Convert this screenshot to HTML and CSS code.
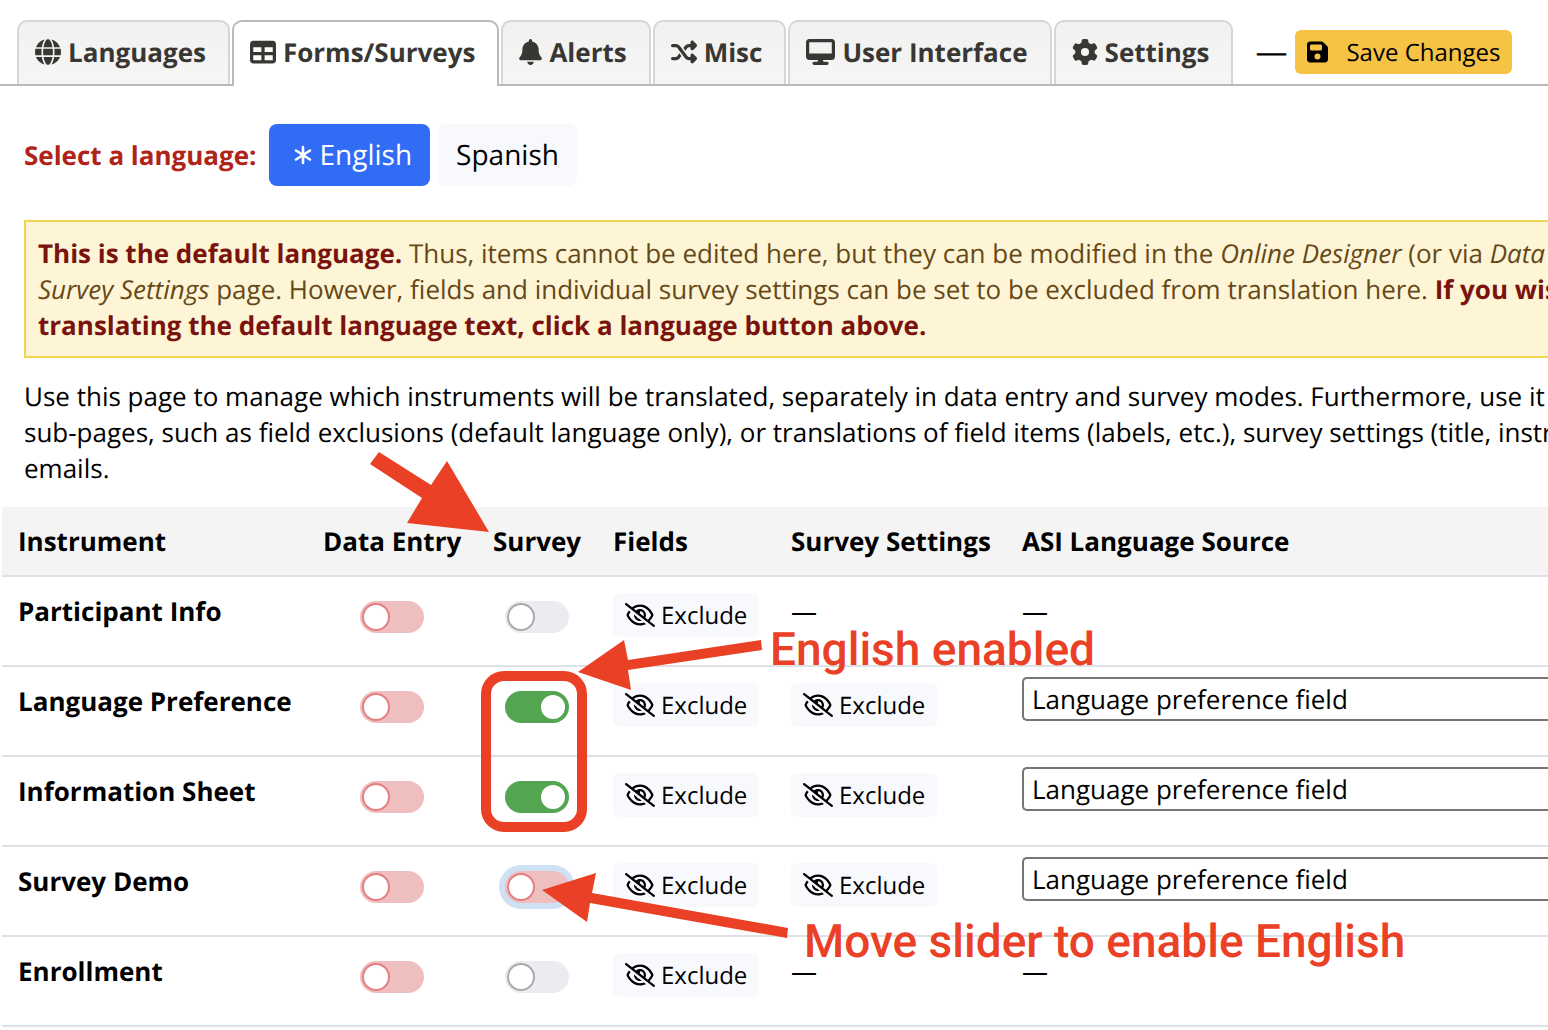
FILE: index.html
```html
<!DOCTYPE html>
<html lang="en">
<head>
  <meta charset="UTF-8">
  <meta name="viewport" content="width=device-width, initial-scale=1">
  <title>Multi-Language Management - Forms/Surveys</title>
  <link rel="stylesheet" href="styles.css">
</head>
<body>

  <!-- icon set -->
  <svg class="sprite" aria-hidden="true">
    <symbol id="i-globe" viewBox="0 0 512 512"><path d="M352 256c0 22.2-1.2 43.6-3.3 64H163.3c-2.2-20.4-3.3-41.8-3.3-64s1.2-43.6 3.3-64H348.7c2.2 20.4 3.3 41.8 3.3 64zm28.8-64H503.9c5.3 20.5 8.1 41.9 8.1 64s-2.8 43.5-8.1 64H380.8c2.1-20.6 3.2-42 3.2-64s-1.1-43.4-3.2-64zm112.6-32H376.7c-10-63.9-29.8-117.4-55.3-151.6c78.3 20.7 142 77.5 171.9 151.6zm-149.1 0H167.7c6.1-36.4 15.5-68.6 27-94.7c10.5-23.6 22.2-40.7 33.5-51.5C239.4 3.2 248.7 0 256 0s16.6 3.2 27.8 13.8c11.3 10.8 23 27.9 33.5 51.5c11.6 26 20.9 58.2 27 94.7zm-209 0H18.6C48.6 85.9 112.2 29.1 190.6 8.4C165.1 42.6 145.3 96.1 135.3 160zM8.1 192H131.2c-2.1 20.6-3.2 42-3.2 64s1.1 43.4 3.2 64H8.1C2.8 299.5 0 278.1 0 256s2.8-43.5 8.1-64zM194.7 446.6c-11.6-26-20.9-58.2-27-94.6H344.3c-6.1 36.4-15.5 68.6-27 94.6c-10.5 23.6-22.2 40.7-33.5 51.5C272.6 508.8 263.3 512 256 512s-16.6-3.2-27.8-13.8c-11.3-10.8-23-27.9-33.5-51.5zM135.3 352c10 63.9 29.8 117.4 55.3 151.6C112.2 482.9 48.6 426.1 18.6 352H135.3zm358.1 0c-30 74.1-93.6 130.9-171.9 151.6c25.5-34.2 45.2-87.7 55.3-151.6H493.4z"/></symbol>
    <symbol id="i-table" viewBox="0 0 512 512"><path fill-rule="evenodd" d="M64 256V160H224v96H64zm0 64H224v96H64V320zm224 96V320H448v96H288zM448 256H288V160H448v96zM64 32C28.7 32 0 60.7 0 96V416c0 35.3 28.7 64 64 64H448c35.3 0 64-28.7 64-64V96c0-35.3-28.7-64-64-64H64z"/></symbol>
    <symbol id="i-bell" viewBox="0 0 448 512"><path d="M224 0c-17.7 0-32 14.3-32 32V51.2C119 66 64 130.6 64 208v18.8c0 47-17.3 92.4-48.5 127.6l-7.4 8.3c-8.4 9.4-10.4 22.9-5.3 34.4S19.4 416 32 416H416c12.6 0 24-7.4 29.2-18.9s3.1-25-5.3-34.4l-7.4-8.3C401.3 319.2 384 273.9 384 226.8V208c0-77.4-55-142-128-156.8V32c0-17.7-14.3-32-32-32zm45.3 493.3c12-12 18.7-28.3 18.7-45.3H224 160c0 17 6.7 33.3 18.7 45.3s28.3 18.7 45.3 18.7s33.3-6.7 45.3-18.7z"/></symbol>
    <symbol id="i-shuffle" viewBox="0 0 512 512"><path d="M403.8 34.4c12-5 25.7-2.2 34.9 6.9l64 64c6 6 9.4 14.1 9.4 22.6s-3.4 16.6-9.4 22.6l-64 64c-9.2 9.2-22.9 11.9-34.9 6.9s-19.8-16.6-19.8-29.6V160H352c-10.1 0-19.6 4.7-25.6 12.8L284 229.3 244 176l31.2-41.6C293.3 110.2 321.8 96 352 96h32V64c0-12.9 7.8-24.6 19.8-29.6zM164 282.7L204 336l-31.2 41.6C154.7 401.8 126.2 416 96 416H32c-17.7 0-32-14.3-32-32s14.3-32 32-32H96c10.1 0 19.6-4.7 25.6-12.8L164 282.7zm274.6 188c-9.2 9.2-22.9 11.9-34.9 6.9s-19.8-16.6-19.8-29.6V416H352c-30.2 0-58.7-14.2-76.8-38.4L121.6 172.8c-6-8.1-15.5-12.8-25.6-12.8H32c-17.7 0-32-14.3-32-32s14.3-32 32-32H96c30.2 0 58.7 14.2 76.8 38.4L326.4 339.2c6 8.1 15.5 12.8 25.6 12.8h32V320c0-12.9 7.8-24.6 19.8-29.6s25.7-2.2 34.9 6.9l64 64c6 6 9.4 14.1 9.4 22.6s-3.4 16.6-9.4 22.6l-64 64z"/></symbol>
    <symbol id="i-desktop" viewBox="0 0 576 512"><path fill-rule="evenodd" d="M64 0C28.7 0 0 28.7 0 64V352c0 35.3 28.7 64 64 64H240l-10.7 32H160c-17.7 0-32 14.3-32 32s14.3 32 32 32H416c17.7 0 32-14.3 32-32s-14.3-32-32-32H346.7L336 416H512c35.3 0 64-28.7 64-64V64c0-35.3-28.7-64-64-64H64zM512 64V288H64V64H512z"/></symbol>
    <symbol id="i-gear" viewBox="0 0 512 512"><path fill-rule="evenodd" d="M495.9 166.6c3.2 8.7 .5 18.4-6.4 24.6l-43.3 39.4c1.1 8.3 1.7 16.8 1.7 25.4s-.6 17.1-1.7 25.4l43.3 39.4c6.9 6.2 9.6 15.9 6.4 24.6c-4.4 11.9-9.7 23.3-15.8 34.3l-4.7 8.1c-6.6 11-14 21.4-22.1 31.2c-5.9 7.2-15.7 9.6-24.5 6.8l-55.7-17.7c-13.4 10.3-28.2 18.9-44 25.4l-12.5 57.1c-2 9.1-9 16.3-18.2 17.8c-13.8 2.3-28 3.5-42.5 3.5s-28.7-1.2-42.5-3.5c-9.2-1.5-16.2-8.7-18.2-17.8l-12.5-57.1c-15.8-6.5-30.6-15.1-44-25.4L83.1 425.9c-8.8 2.8-18.6 .3-24.5-6.8c-8.1-9.8-15.5-20.2-22.1-31.2l-4.7-8.1c-6.1-11-11.4-22.4-15.8-34.3c-3.2-8.7-.5-18.4 6.4-24.6l43.3-39.4C64.6 273.1 64 264.6 64 256s.6-17.1 1.7-25.4L22.4 191.2c-6.9-6.2-9.6-15.9-6.4-24.6c4.4-11.9 9.7-23.3 15.8-34.3l4.7-8.1c6.6-11 14-21.4 22.1-31.2c5.9-7.2 15.7-9.6 24.5-6.8l55.7 17.7c13.4-10.3 28.2-18.9 44-25.4l12.5-57.1c2-9.1 9-16.3 18.2-17.8C227.3 1.2 241.5 0 256 0s28.7 1.2 42.5 3.5c9.2 1.5 16.2 8.7 18.2 17.8l12.5 57.1c15.8 6.5 30.6 15.1 44 25.4l55.7-17.7c8.8-2.8 18.6-.3 24.5 6.8c8.1 9.8 15.5 20.2 22.1 31.2l4.7 8.1c6.1 11 11.4 22.4 15.8 34.3zM256 336a80 80 0 1 0 0-160 80 80 0 1 0 0 160z"/></symbol>
    <symbol id="i-save" viewBox="0 0 448 512"><path fill-rule="evenodd" d="M64 32C28.7 32 0 60.7 0 96V416c0 35.3 28.7 64 64 64H384c35.3 0 64-28.7 64-64V173.3c0-17-6.7-33.3-18.7-45.3L352 50.7C340 38.7 323.7 32 306.7 32H64zm0 96c0-17.7 14.3-32 32-32H288c17.7 0 32 14.3 32 32v64c0 17.7-14.3 32-32 32H96c-17.7 0-32-14.3-32-32V128zM224 288a64 64 0 1 1 0 128 64 64 0 1 1 0-128z"/></symbol>
    <symbol id="i-hide" viewBox="0 0 640 512"><path d="M38.8 5.1C28.4-3.1 13.3-1.2 5.1 9.2S-1.2 34.7 9.2 42.9l592 464c10.4 8.2 25.5 6.3 33.7-4.1s6.3-25.5-4.1-33.7L525.6 386.7c39.6-40.6 66.4-86.1 79.9-118.4c3.3-7.9 3.3-16.7 0-24.6c-14.9-35.7-46.2-87.7-93-131.1C465.5 68.8 400.8 32 320 32c-68.2 0-125 26.3-169.3 60.8L38.8 5.1zm151 118.3C226 97.7 269.5 80 320 80c65.2 0 118.8 29.6 159.9 67.7C518.4 183.5 545 226 558.6 256c-12.6 28-36.6 66.8-70.9 100.9l-53.8-42.2c9.1-17.6 14.2-37.5 14.2-58.7c0-70.7-57.3-128-128-128c-32.2 0-61.7 11.9-84.2 31.5l-46.1-36.1zM394.9 284.2l-81.5-63.9c4.2-8.5 6.6-18.2 6.6-28.3c0-5.5-.7-10.9-2-16c.7 0 1.3 0 2 0c44.2 0 80 35.8 80 80c0 9.9-1.8 19.4-5.1 28.2zm9.4 130.3C378.8 425.4 350.7 432 320 432c-65.2 0-118.8-29.6-159.9-67.7C121.6 328.5 95 286 81.4 256c8.3-18.4 21.5-41.5 39.4-64.8L83.1 161.5C60.3 191.2 44 220.8 34.5 243.7c-3.3 7.9-3.3 16.7 0 24.6c14.9 35.7 46.2 87.7 93 131.1C174.5 443.2 239.2 480 320 480c47.8 0 89.9-12.9 126.2-32.5l-41.9-33zM192 256c0 70.7 57.3 128 128 128c13.3 0 26.1-2 38.2-5.8L302 334c-23.5-5.4-43.1-21.2-53.7-42.3l-56.1-44.2c-.2 2.8-.3 5.6-.3 8.5z"/></symbol>
    <symbol id="i-star" viewBox="0 0 18 20"><path fill="none" stroke="currentColor" stroke-width="2.6" stroke-linecap="round" d="M9 2v16M2 5.5l14 9M16 5.5l-14 9"/></symbol>
  </svg>

  <nav class="tabs">
    <a href="#" class="tab"><svg class="icon"><use href="#i-globe"/></svg>Languages</a>
    <a href="#" class="tab active"><svg class="icon"><use href="#i-table"/></svg>Forms/Surveys</a>
    <a href="#" class="tab"><svg class="icon narrow"><use href="#i-bell"/></svg>Alerts</a>
    <a href="#" class="tab"><svg class="icon"><use href="#i-shuffle"/></svg>Misc</a>
    <a href="#" class="tab"><svg class="icon wide"><use href="#i-desktop"/></svg>User Interface</a>
    <a href="#" class="tab"><svg class="icon"><use href="#i-gear"/></svg>Settings</a>
    <div class="actions">
      <span class="dash">—</span>
      <button type="button" class="btn btn-save"><svg class="icon-save"><use href="#i-save"/></svg>Save Changes</button>
    </div>
  </nav>

  <main>
    <section class="intro">
      <div class="languages">
        <span class="languages-title">Select a language:</span>
        <button type="button" class="lang selected"><svg class="icon-star"><use href="#i-star"/></svg>English</button>
        <button type="button" class="lang">Spanish</button>
      </div>

      <div class="notice">
        <b>This is the default language.</b> Thus, items cannot be edited here, but they can be modified in the <i>Online Designer</i> (or via <i>Data</i><br>
        <i>Survey Settings</i> page. However, fields and individual survey settings can be set to be excluded from translation here. <b>If you wish</b><br>
        <b>translating the default language text, click a language button above.</b>
      </div>

      <p class="help">
        Use this page to manage which instruments will be translated, separately in data entry and survey modes. Furthermore, use it<br>
        sub-pages, such as field exclusions (default language only), or translations of field items (labels, etc.), survey settings (title, instructions<br>
        emails.
      </p>
    </section>

    <table class="instruments">
      <colgroup>
        <col class="col-name">
        <col class="col-entry">
        <col class="col-survey">
        <col class="col-fields">
        <col class="col-settings">
        <col>
      </colgroup>
      <thead>
        <tr>
          <th>Instrument</th>
          <th>Data Entry</th>
          <th>Survey</th>
          <th>Fields</th>
          <th>Survey Settings</th>
          <th>ASI Language Source</th>
        </tr>
      </thead>
      <tbody>
        <tr>
          <th scope="row">Participant Info</th>
          <td class="center"><input type="checkbox" class="switch off" aria-label="Participant Info data entry"></td>
          <td class="center"><input type="checkbox" class="switch" aria-label="Participant Info survey"></td>
          <td><button type="button" class="btn"><svg class="icon-hide"><use href="#i-hide"/></svg>Exclude</button></td>
          <td>—</td>
          <td>—</td>
        </tr>
        <tr>
          <th scope="row">Language Preference</th>
          <td class="center"><input type="checkbox" class="switch off" aria-label="Language Preference data entry"></td>
          <td class="center"><input type="checkbox" class="switch" checked aria-label="Language Preference survey"></td>
          <td><button type="button" class="btn"><svg class="icon-hide"><use href="#i-hide"/></svg>Exclude</button></td>
          <td><button type="button" class="btn"><svg class="icon-hide"><use href="#i-hide"/></svg>Exclude</button></td>
          <td class="source"><select aria-label="Language Preference ASI language source"><option>Language preference field</option></select></td>
        </tr>
        <tr>
          <th scope="row">Information Sheet</th>
          <td class="center"><input type="checkbox" class="switch off" aria-label="Information Sheet data entry"></td>
          <td class="center"><input type="checkbox" class="switch" checked aria-label="Information Sheet survey"></td>
          <td><button type="button" class="btn"><svg class="icon-hide"><use href="#i-hide"/></svg>Exclude</button></td>
          <td><button type="button" class="btn"><svg class="icon-hide"><use href="#i-hide"/></svg>Exclude</button></td>
          <td class="source"><select aria-label="Information Sheet ASI language source"><option>Language preference field</option></select></td>
        </tr>
        <tr>
          <th scope="row">Survey Demo</th>
          <td class="center"><input type="checkbox" class="switch off" aria-label="Survey Demo data entry"></td>
          <td class="center"><input type="checkbox" class="switch off focused" aria-label="Survey Demo survey"></td>
          <td><button type="button" class="btn"><svg class="icon-hide"><use href="#i-hide"/></svg>Exclude</button></td>
          <td><button type="button" class="btn"><svg class="icon-hide"><use href="#i-hide"/></svg>Exclude</button></td>
          <td class="source"><select aria-label="Survey Demo ASI language source"><option>Language preference field</option></select></td>
        </tr>
        <tr>
          <th scope="row">Enrollment</th>
          <td class="center"><input type="checkbox" class="switch off" aria-label="Enrollment data entry"></td>
          <td class="center"><input type="checkbox" class="switch" aria-label="Enrollment survey"></td>
          <td><button type="button" class="btn"><svg class="icon-hide"><use href="#i-hide"/></svg>Exclude</button></td>
          <td>—</td>
          <td>—</td>
        </tr>
      </tbody>
    </table>
  </main>

  <!-- red markup drawn over the page -->
  <svg class="marks" aria-hidden="true">
    <path d="M379 452L370 464L422 498L407 523L489 532L447 461L431 485Z"/>
    <path d="M578 672L624 640L628 660L761 640L762 650L628 670L631 690Z"/>
    <path d="M542 890L596 873L592 893L788 928L787 938L590 903L587 922Z"/>
    <rect x="486" y="676" width="96" height="151" rx="18"/>
  </svg>
  <span class="note note-enabled">English enabled</span>
  <span class="note note-move">Move slider to enable English</span>

</body>
</html>
```
FILE: styles.css
```css
:root {
  --text: #000;
  --tab-text: #393733;
  --line: #dee2e6;
  --light: #f8f9fc;
  --mark: #ea4026;
}

* {
  box-sizing: border-box;
}

body {
  position: relative;
  margin: 0;
  padding-top: 20px;
  background: #fff;
  color: var(--text);
  font-family: "Open Sans", sans-serif;
  font-size: 26px;
  line-height: 36px;
  text-rendering: geometricPrecision;
  overflow-x: hidden;
}

button, select {
  font-family: inherit;
  color: var(--text);
  text-rendering: inherit;
}

.sprite {
  position: absolute;
  width: 0;
  height: 0;
}

svg {
  fill: currentColor;
  flex: none;
}

/* tabs */
.tabs {
  display: flex;
  gap: 2px;
  height: 66px;
  padding-left: 17px;
  border-bottom: 2px solid #b9b9b9;
}

.tab {
  display: flex;
  align-items: center;
  gap: 7px;
  padding: 0 22px 2px 16px;
  border: 2px solid #d6d6d4;
  border-bottom: 0;
  border-radius: 10px 10px 0 0;
  background: linear-gradient(#f1f1f0, #f6f6f6);
  color: var(--tab-text);
  font-weight: bold;
  text-decoration: none;
  white-space: nowrap;
}

.tab.active {
  margin-bottom: -2px;
  padding-bottom: 4px;
  border-color: #b9b9b9;
  background: #fff;
}

.icon {
  width: 26px;
  height: 26px;
}

.icon.narrow {
  width: 23px;
}

.icon.wide {
  width: 29px;
}

.actions {
  display: flex;
  align-items: center;
  gap: 8px;
  margin-left: 20px;
}

.dash {
  font-size: 32px;
}

.btn {
  display: inline-flex;
  align-items: center;
  gap: 6px;
  height: 44px;
  padding: 0 12px;
  border: 0;
  border-radius: 6px;
  background: var(--light);
  font-size: 24px;
  white-space: nowrap;
}

.btn-save {
  gap: 18px;
  background: #f6c344;
}

.icon-save {
  width: 21px;
  height: 24px;
}

.icon-hide {
  width: 30px;
  height: 24px;
}

/* language picker */
.intro {
  padding: 38px 0 21px 24px;
  white-space: nowrap;
}

.languages {
  display: flex;
  align-items: center;
  gap: 8px;
}

.languages-title {
  margin-right: 4px;
  color: #b02318;
  font-weight: bold;
}

.lang {
  display: flex;
  align-items: center;
  gap: 8px;
  height: 62px;
  padding: 0 18px;
  border: 0;
  border-radius: 8px;
  background: var(--light);
  font-size: 28px;
}

.lang.selected {
  padding-left: 25px;
  background: #316cf4;
  color: #fff;
}

.icon-star {
  width: 18px;
  height: 20px;
}

.notice {
  margin-top: 34px;
  padding: 13px 0 13px 12px;
  border: 2px solid #f2d650;
  border-right: 0;
  background: #fdf5d5;
  color: #664818;
  overflow: hidden;
}

.notice b {
  color: #7a130d;
}

.help {
  margin: 20px 0 0;
  overflow: hidden;
}

/* instruments table */
.instruments {
  width: calc(100% - 2px);
  margin-left: 2px;
  table-layout: fixed;
  border-collapse: separate;
  border-spacing: 0;
}

.col-name { width: 305px; }
.col-entry { width: 170px; }
.col-survey { width: 120px; }
.col-fields { width: 178px; }
.col-settings { width: 231px; }

.instruments th,
.instruments td {
  height: 90px;
  padding: 16px 0 0 16px;
  border-bottom: 2px solid var(--line);
  text-align: left;
  vertical-align: top;
  white-space: nowrap;
}

.instruments thead th {
  height: 70px;
  background: #f4f4f4;
}

.instruments .center {
  padding: 24px 16px 0;
  text-align: center;
}

.instruments .source {
  padding-top: 10px;
}

.switch {
  appearance: none;
  display: block;
  width: 64px;
  height: 32px;
  margin: 0 auto;
  padding: 2px;
  border-radius: 16px;
  background: #ebecf0;
  color: #aaa;
}

.switch::before {
  content: "";
  display: block;
  width: 28px;
  height: 28px;
  box-sizing: border-box;
  border: 2px solid currentColor;
  border-radius: 50%;
  background: #fff;
}

.switch.off {
  background: #efbfc0;
  color: #e37f80;
}

.switch:checked {
  background: #54a552;
  color: #54a552;
}

.switch:checked::before {
  margin-left: auto;
}

.switch.focused {
  box-shadow: 0 0 0 6px #cfe1f5;
}

select {
  appearance: none;
  display: block;
  width: 100%;
  height: 44px;
  padding: 0 8px;
  border: 2px solid #767676;
  border-right: 0;
  border-radius: 5px 0 0 5px;
  background: #fff;
  font-size: 26px;
}

/* markup */
.marks {
  position: absolute;
  top: 0;
  left: 0;
  width: 100%;
  height: 100%;
  fill: var(--mark);
  pointer-events: none;
}

.marks rect {
  fill: none;
  stroke: var(--mark);
  stroke-width: 10;
}

.note {
  position: absolute;
  color: var(--mark);
  font-family: Roboto, sans-serif;
  font-size: 46px;
  font-weight: 500;
  line-height: 60px;
  white-space: nowrap;
}

.note-enabled {
  top: 620px;
  left: 770px;
}

.note-move {
  top: 912px;
  left: 804px;
}
```
